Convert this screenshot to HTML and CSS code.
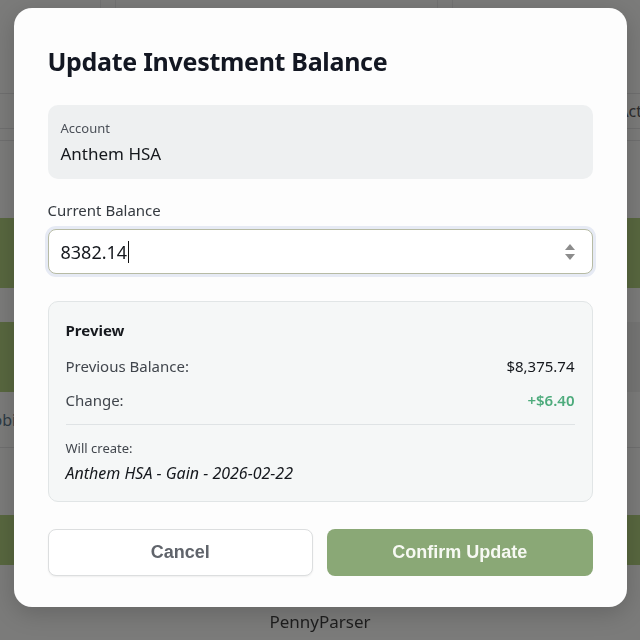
FILE: index.html
```html
<!DOCTYPE html>
<html lang="en">

<head>
    <meta charset="UTF-8">
    <title>PennyParser</title>
    <link rel="stylesheet" href="styles.css">
</head>

<body>
    <div class="page">
        <div class="row row-top">
            <span class="col-line col-a"></span>
            <span class="col-line col-b"></span>
        </div>
        <div class="row row-line row-head"><span class="cell-right">Actro</span></div>
        <div class="row row-line row-thin"></div>
        <div class="row row-plain row-gap1"></div>
        <div class="row row-green"></div>
        <div class="row row-plain row-gap2"></div>
        <div class="row row-split">
            <span class="half half-green"></span>
            <span class="half half-dark"></span>
        </div>
        <div class="row row-line row-text"><span class="cell-left">Mobile</span></div>
        <div class="row row-text2"><span class="cell-left cell-f">F</span></div>
        <div class="row row-green row-last"></div>
        <div class="row row-plain"></div>
    </div>

    <div class="overlay">
        <div class="modal">
            <h1 class="modal-title">Update Investment Balance</h1>

            <div class="account-box">
                <div class="account-label">Account</div>
                <div class="account-name">Anthem HSA</div>
            </div>

            <label class="field-label">Current Balance</label>
            <div class="amount-input">
                <span class="amount-value">8382.14</span><span class="caret"></span>
                <svg class="spinner" width="12" height="18" viewBox="0 0 12 18">
                    <path d="M6 1 L11 7 L1 7 Z" fill="#8c8c8c" />
                    <path d="M1 11 L11 11 L6 17 Z" fill="#8c8c8c" />
                </svg>
            </div>

            <div class="preview">
                <div class="preview-title">Preview</div>
                <div class="preview-row">
                    <span>Previous Balance:</span>
                    <span class="amount">$8,375.74</span>
                </div>
                <div class="preview-row">
                    <span>Change:</span>
                    <span class="amount gain">+$6.40</span>
                </div>
                <div class="preview-divider"></div>
                <div class="will-label">Will create:</div>
                <div class="will-value">Anthem HSA - Gain - 2026-02-22</div>
            </div>

            <div class="actions">
                <button class="btn btn-cancel">Cancel</button>
                <button class="btn btn-confirm">Confirm Update</button>
            </div>
        </div>
        <div class="brand">PennyParser</div>
    </div>
</body>

</html>
```

FILE: styles.css
```css
body {
    margin: 0;
    font-family: "Noto Sans", "Open Sans", sans-serif;
    background: #7b7b7a;
}

/* page behind the dimmed overlay */
.page {
    display: flex;
    flex-direction: column;
    height: 640px;
    overflow: hidden;
}

.row {
    position: relative;
    flex: none;
}

.row-top {
    height: 93px;
    display: flex;
}

.col-line {
    width: 14px;
    border-left: 1px solid #737373;
    border-right: 1px solid #737373;
}

.col-a {
    margin-left: 100px;
}

.col-b {
    margin-left: 321px;
}

.row-line {
    border-top: 1px solid #6f6f6f;
}

.row-head {
    height: 34px;
    display: flex;
    align-items: center;
    justify-content: flex-end;
}

.cell-right {
    color: #2d2d2d;
    font-size: 16px;
    margin-right: -18px;
}

.row-thin {
    height: 11px;
    border-bottom: 1px solid #6f6f6f;
}

.row-gap1 {
    height: 77px;
}

.row-green {
    height: 70px;
    background: #58673f;
}

.row-gap2 {
    height: 34px;
}

.row-split {
    height: 70px;
    display: flex;
}

.half {
    flex: 1;
}

.half-green {
    background: #58673f;
}

.half-dark {
    background: #757574;
}

.row-text {
    height: 54px;
    margin-top: 1px;
    border-top: none;
    border-bottom: 1px solid #6f6f6f;
    display: flex;
    align-items: center;
}

.cell-left {
    color: #2d3a44;
    font-size: 16px;
    margin-left: -22px;
}

.row-text2 {
    height: 67px;
    display: flex;
    align-items: center;
}

.cell-f {
    color: #222;
    margin-left: 24px;
}

.row-last {
    height: 50px;
}

.row-plain {
    background: #7b7b7a;
}

/* overlay + modal */
.overlay {
    position: fixed;
    inset: 0;
    display: flex;
    flex-direction: column;
    align-items: center;
    padding-top: 8px;
}

.modal {
    width: 613px;
    box-sizing: border-box;
    padding: 37px 34px 31px;
    background: #fdfdfd;
    border-radius: 18px;
    box-shadow: 0 6px 24px rgba(0, 0, 0, 0.18);
}

.modal-title {
    margin: 0 0 28px;
    font-size: 25px;
    letter-spacing: -0.3px;
    line-height: 32px;
    font-weight: 700;
    color: #131722;
}

.account-box {
    background: #eef0f1;
    border-radius: 10px;
    padding: 14px 13px;
}

.account-label {
    font-size: 13px;
    line-height: 18px;
    color: #4b5058;
}

.account-name {
    margin-top: 6px;
    font-size: 17px;
    line-height: 22px;
    color: #15181d;
}

.field-label {
    display: block;
    margin-top: 21px;
    font-size: 15px;
    line-height: 20px;
    color: #353a40;
}

.amount-input {
    margin-top: 9px;
    height: 45px;
    box-sizing: border-box;
    border: 1px solid #b7bba4;
    border-radius: 8px;
    box-shadow: 0 0 0 3px #e6eaf4;
    background: #fff;
    display: flex;
    align-items: center;
    padding: 0 16px 0 12px;
}

.amount-value {
    font-size: 18px;
    color: #15181d;
}

.caret {
    width: 1px;
    height: 22px;
    background: #111;
    margin-left: 1px;
}

.spinner {
    margin-left: auto;
}

.preview {
    margin-top: 27px;
    background: #f5f7f7;
    border: 1px solid #e1e5e6;
    border-radius: 10px;
    padding: 17px 17px 17px;
}

.preview-title {
    font-size: 15px;
    line-height: 22px;
    font-weight: 700;
    color: #16191e;
}

.preview-row {
    display: flex;
    justify-content: space-between;
    margin-top: 14px;
    font-size: 15px;
    line-height: 22px;
    color: #41464d;
}

.preview-row + .preview-row {
    margin-top: 12px;
}

.amount {
    color: #15181d;
}

.gain {
    color: #4dab7c;
    font-weight: 600;
}

.preview-divider {
    margin-top: 13px;
    border-top: 1px solid #dfe3e5;
}

.will-label {
    margin-top: 14px;
    font-size: 13px;
    line-height: 18px;
    color: #41464d;
}

.will-value {
    margin-top: 5px;
    font-size: 16px;
    line-height: 22px;
    font-style: italic;
    color: #15181d;
}

.actions {
    margin-top: 27px;
    display: grid;
    grid-template-columns: 1fr 1fr;
    gap: 14px;
}

.btn {
    height: 47px;
    border-radius: 8px;
    font-family: "Liberation Sans", Arial, sans-serif;
    font-size: 18px;
    font-weight: 700;
}

.btn-cancel {
    background: #fff;
    border: 1px solid #dcdedf;
    color: #60646b;
    box-shadow: 0 1px 2px rgba(0, 0, 0, 0.06);
}

.btn-confirm {
    background: #8aa876;
    border: none;
    color: #f7f9f3;
}

.brand {
    margin-top: 3px;
    font-size: 17px;
    color: #1c1c1c;
}
```
